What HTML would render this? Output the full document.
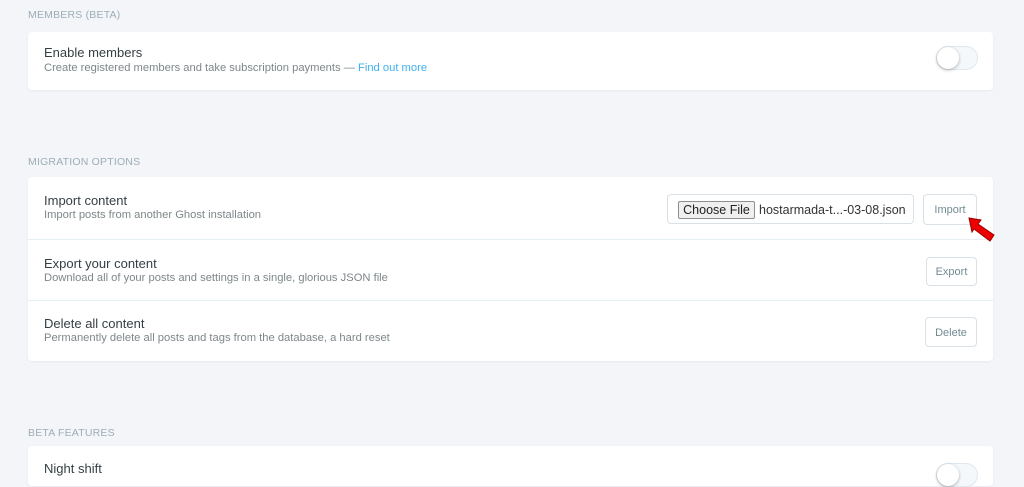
<!DOCTYPE html>
<html><head><style>
body{margin:0;width:1024px;height:475px;overflow:hidden;background:#f4f5f8;font-family:"Liberation Sans",sans-serif;position:relative}
.lbl{position:absolute;left:28px;font-size:10.5px;color:#9baeb8;letter-spacing:0.2px}
.card{position:absolute;left:28px;width:965px;background:#fff;border-radius:4px;box-shadow:0 1px 2px rgba(0,0,0,0.05)}
.row{position:relative;border-bottom:1px solid #e5eef3}
.row:last-child{border-bottom:none}
.t{position:absolute;left:16px;font-size:13px;color:#343f44}
.d{position:absolute;left:16px;font-size:11.2px;color:#7d878a}
.btn{position:absolute;border:1px solid #dae1e6;border-radius:4px;background:#fff;font-size:11px;color:#738a94;text-align:center;box-sizing:border-box}
.tog{position:absolute;width:42px;height:24px;border:1px solid #dfe8ef;border-radius:12px;background:#f4f8fb;box-sizing:border-box}
.tog::after{content:"";position:absolute;left:0;top:0;width:22px;height:22px;border-radius:50%;background:#fff;box-shadow:0 1px 3px rgba(0,0,0,0.3)}
</style></head><body>
<div class="lbl" style="top:9px">MEMBERS (BETA)</div>
<div class="card" style="top:32px;height:58px">
<div class="t" style="top:13px">Enable members</div>
<div class="d" style="top:30px">Create registered members and take subscription payments — <span style="color:#3eb0ef">Find out more</span></div>
<div class="tog" style="left:908px;top:14px"></div>
</div>
<div class="lbl" style="top:156px">MIGRATION OPTIONS</div>
<div class="card" style="top:177px;height:184px">
<div class="row" style="height:62px">
<div class="t" style="top:16px">Import content</div>
<div class="d" style="top:32px">Import posts from another Ghost installation</div>
<div style="position:absolute;left:639px;top:17px;width:247px;height:30px;border:1px solid #dae1e6;border-radius:4px;box-sizing:border-box;background:#fff">
<div style="position:absolute;left:10px;top:6px;width:77px;height:18px;background:#efefef;border:1px solid #8f8f8f;border-radius:2px;box-sizing:border-box;font-size:12.5px;color:#222;text-align:center;line-height:16px">Choose File</div>
<div style="position:absolute;left:91px;top:6px;font-size:12.5px;color:#333;line-height:18px">hostarmada-t...-03-08.json</div>
</div>
<div class="btn" style="left:895px;top:17px;width:54px;height:31px;line-height:31px">Import</div>
</div>
<div class="row" style="height:60px">
<div class="t" style="top:16px">Export your content</div>
<div class="d" style="top:32px">Download all of your posts and settings in a single, glorious JSON file</div>
<div class="btn" style="left:898px;top:17px;width:51px;height:29px;line-height:29px">Export</div>
</div>
<div class="row" style="height:61px">
<div class="t" style="top:15px">Delete all content</div>
<div class="d" style="top:31px">Permanently delete all posts and tags from the database, a hard reset</div>
<div class="btn" style="left:897px;top:16px;width:52px;height:30px;line-height:30px">Delete</div>
</div>
</div>
<div class="lbl" style="top:427px">BETA FEATURES</div>
<div class="card" style="top:446px;height:40px">
<div class="t" style="top:15px">Night shift</div>
<div class="tog" style="left:908px;top:17px"></div>
</div>
<svg style="position:absolute;left:966px;top:216px" width="32" height="28" viewBox="0 0 32 28"><path d="M3 2 L15 4 L12 8 L28 19 L24 25 L8 13 L6 16 Z" fill="#e00" stroke="#900" stroke-width="1"/></svg>
</body></html>
